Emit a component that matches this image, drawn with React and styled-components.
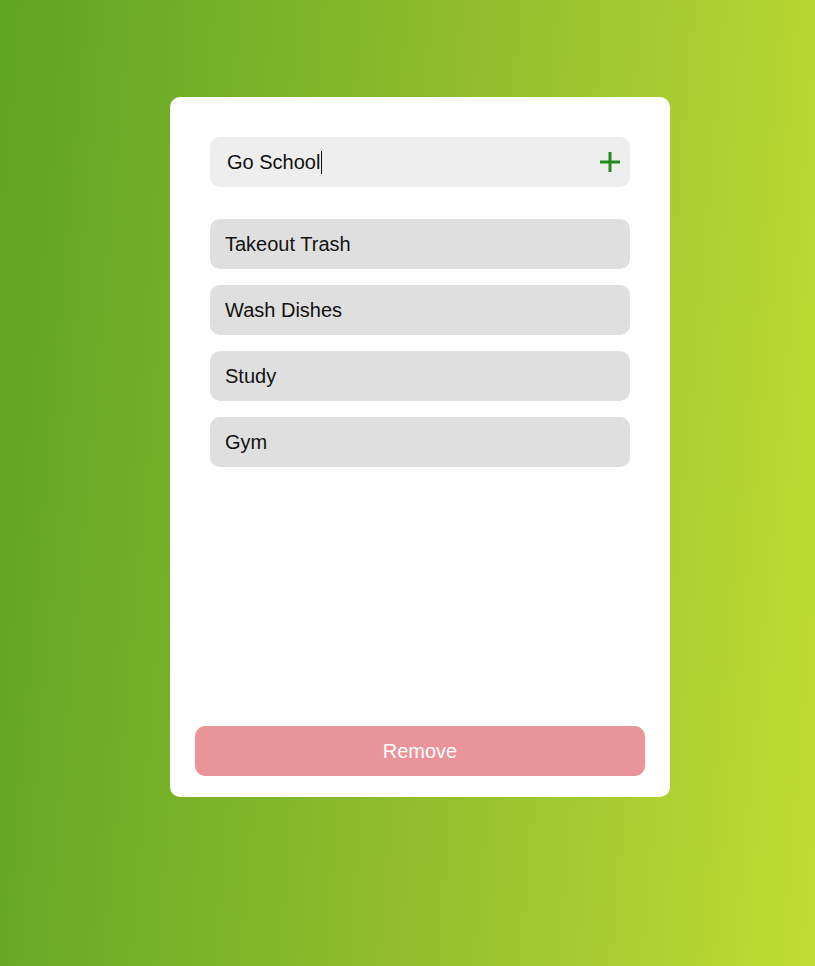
import styled, { createGlobalStyle } from "styled-components";

const GlobalStyle = createGlobalStyle`
  * {
    box-sizing: border-box;
  }
  body {
    margin: 0;
    font-family: "Liberation Sans", Arial, sans-serif;
  }
`;

const Page = styled.div`
  width: 100vw;
  min-height: 100vh;
  background: linear-gradient(95deg, #5fa422 0%, #8dbc2d 50%, #c2dc34 100%);
  padding: 97px 0 0 170px;
`;

const Card = styled.div`
  width: 500px;
  height: 700px;
  background: #fff;
  border-radius: 10px;
  padding: 40px 25px 21px;
  display: flex;
  flex-direction: column;
`;

const Inner = styled.div`
  padding: 0 15px;
  flex: 1;
  display: flex;
  flex-direction: column;
`;

const InputBox = styled.div`
  height: 50px;
  background: #eeeeee;
  border-radius: 10px;
  display: flex;
  align-items: center;
  padding: 0 10px 0 17px;
  font-size: 20px;
  color: #111;
  margin-bottom: 32px;
`;

const InputText = styled.span`
  flex: 1;
  display: flex;
  align-items: center;
`;

const Caret = styled.span`
  display: inline-block;
  width: 1px;
  height: 23px;
  background: #111;
  margin-left: 1px;
`;

const AddBtn = styled.button`
  border: none;
  background: none;
  padding: 0;
  width: 20px;
  height: 20px;
  display: flex;
  align-items: center;
  justify-content: center;
`;

const List = styled.ul`
  list-style: none;
  margin: 0;
  padding: 0;
  display: flex;
  flex-direction: column;
  gap: 16px;
`;

const Item = styled.li`
  height: 50px;
  background: #dfdfdf;
  border-radius: 10px;
  display: flex;
  align-items: center;
  padding: 0 15px;
  font-size: 20px;
  color: #111;
`;

const RemoveBtn = styled.button`
  margin-top: auto;
  height: 50px;
  width: 100%;
  border: none;
  border-radius: 10px;
  background: #e99499;
  color: #fff;
  font-family: "Liberation Sans", Arial, sans-serif;
  font-size: 20px;
`;

const todos = ["Takeout Trash", "Wash Dishes", "Study", "Gym"];

export default function App() {
  return (
    <>
      <GlobalStyle />
      <Page>
        <Card>
          <Inner>
            <InputBox>
              <InputText>
                Go School
                <Caret />
              </InputText>
              <AddBtn>
                <svg width="20" height="20" viewBox="0 0 20 20">
                  <path d="M10 0v20M0 10h20" stroke="#228b1f" strokeWidth="3" />
                </svg>
              </AddBtn>
            </InputBox>
            <List>
              {todos.map((t) => (
                <Item key={t}>{t}</Item>
              ))}
            </List>
          </Inner>
          <RemoveBtn>Remove</RemoveBtn>
        </Card>
      </Page>
    </>
  );
}
